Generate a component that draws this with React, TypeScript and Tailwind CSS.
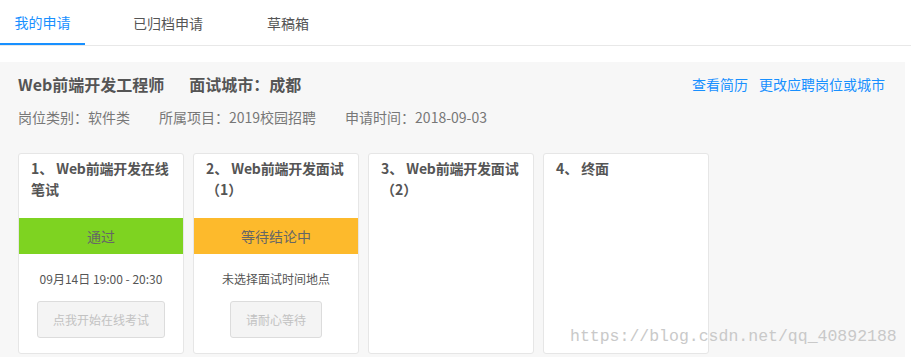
import React from "react";

type Stage = {
  no: number;
  lines: string[];
  status?: { label: string; color: string };
  note?: string;
  action?: { label: string; width: string };
};

const stages: Stage[] = [
  {
    no: 1,
    lines: ["Web前端开发在线", "笔试"],
    status: { label: "通过", color: "bg-[#7ed321]" },
    note: "09月14日 19:00 - 20:30",
    action: { label: "点我开始在线考试", width: "w-[128px]" },
  },
  {
    no: 2,
    lines: ["Web前端开发面试", "（1）"],
    status: { label: "等待结论中", color: "bg-[#fdba2c]" },
    note: "未选择面试时间地点",
    action: { label: "请耐心等待", width: "w-[92px]" },
  },
  { no: 3, lines: ["Web前端开发面试", "（2）"] },
  { no: 4, lines: ["终面"] },
];

const tabs = ["我的申请", "已归档申请", "草稿箱"];

function StageCard({ stage }: { stage: Stage }) {
  return (
    <div className="flex h-[201px] w-[166px] flex-col rounded-[3px] border border-[#e6e6e6] bg-white">
      <div className="h-[64px] px-3 pt-[4px] text-[14px] leading-[21px] font-bold whitespace-nowrap text-[#555]">
        {stage.lines.map((line, i) => (
          <div key={i}>
            {i === 0 ? (
              <>
                <span>{stage.no}、</span>
                <span className="ml-[3px] tracking-[-0.2px]">{line}</span>
              </>
            ) : (
              line
            )}
          </div>
        ))}
      </div>
      {stage.status && (
        <div className={`flex h-[36px] items-center justify-center text-[14px] text-[#666] ${stage.status.color}`}>
          {stage.status.label}
        </div>
      )}
      {stage.note && (
        <div className="mt-[16px] text-center text-[12px] leading-[18px] text-[#555]">{stage.note}</div>
      )}
      {stage.action && (
        <div className="mt-[13px] flex justify-center">
          <button
            className={`h-[37px] ${stage.action.width} rounded-[3px] border border-[#dcdcdc] bg-[#f4f4f4] text-[12px] text-[#c2c2c2]`}
          >
            {stage.action.label}
          </button>
        </div>
      )}
    </div>
  );
}

export default function App() {
  return (
    <div
      className="relative h-[357px] w-[911px] overflow-hidden bg-white"
      style={{ fontFamily: '"Noto Sans CJK SC", "Noto Sans", sans-serif' }}
    >
      {/* tabs */}
      <div className="flex h-[46px] border-b border-[#e8e8e8] text-[14px]">
        {tabs.map((t, i) => (
          <div
            key={t}
            className={
              i === 0
                ? "flex w-[85px] items-center justify-center border-b-2 border-[#1890ff] pt-[2px] text-[#1890ff]"
                : i === 1
                  ? "ml-[48px] flex items-center pt-[2px] text-[#555]"
                  : "ml-[64px] flex items-center pt-[2px] text-[#555]"
            }
          >
            {t}
          </div>
        ))}
      </div>

      {/* application panel */}
      <div className="mt-[16px] w-[905px] bg-[#f7f7f7] pr-[20px] pb-[10px] pl-[18px]">
        <div className="flex items-center justify-between pt-[10px]">
          <div className="flex gap-[25px] text-[16px] leading-[24px] font-bold text-[#555]">
            <span>Web前端开发工程师</span>
            <span>面试城市：成都</span>
          </div>
          <div className="flex gap-[11px] text-[14px] leading-[24px] text-[#1890ff]">
            <a>查看简历</a>
            <a>更改应聘岗位或城市</a>
          </div>
        </div>
        <div className="mt-[10px] flex gap-[29px] text-[14px] leading-[22px] text-[#777]">
          <span>岗位类别：软件类</span>
          <span>所属项目：2019校园招聘</span>
          <span>申请时间：2018-09-03</span>
        </div>
        <div className="mt-[25px] flex gap-[9px]">
          {stages.map((s) => (
            <StageCard key={s.no} stage={s} />
          ))}
        </div>
      </div>

      {/* watermark */}
      <div
        className="pointer-events-none absolute top-[325px] left-[570px] text-[16.5px] leading-[24px] text-[#c9c9c9]"
        style={{ fontFamily: '"Liberation Mono", monospace' }}
      >
        https://blog.csdn.net/qq_40892188
      </div>
    </div>
  );
}
